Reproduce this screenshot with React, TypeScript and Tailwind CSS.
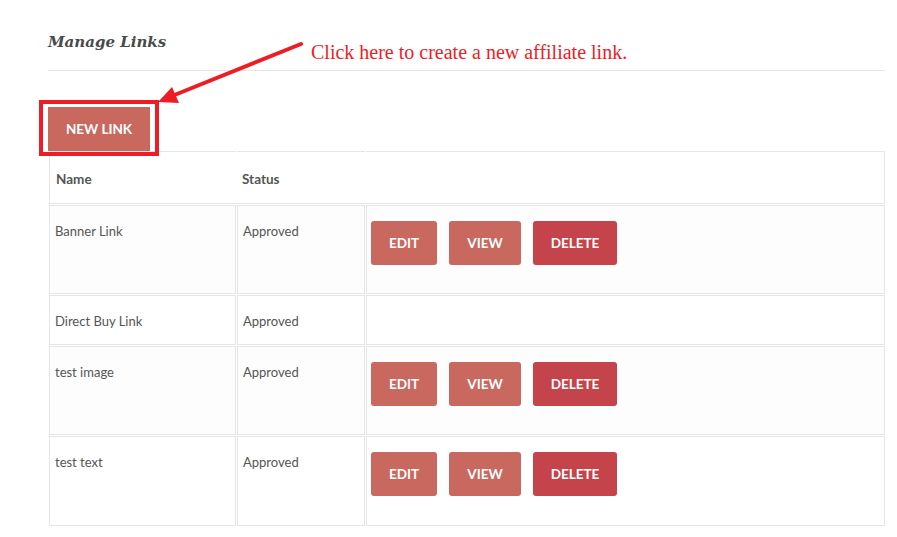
const links = [
  { name: "Banner Link", status: "Approved", actions: true, h: "h-[89px]" },
  { name: "Direct Buy Link", status: "Approved", actions: false, h: "h-[50px]" },
  { name: "test image", status: "Approved", actions: true, h: "h-[89px]" },
  { name: "test text", status: "Approved", actions: true, h: "h-[90px]" },
];

function ActionButtons() {
  return (
    <div className="flex gap-[12px] pt-[15px] pl-[4px]">
      <button className="w-[66px] h-[44px] rounded-[3px] bg-[#c8685f] text-white text-[13.5px] font-bold">EDIT</button>
      <button className="w-[72px] h-[44px] rounded-[3px] bg-[#c8685f] text-white text-[13.5px] font-bold">VIEW</button>
      <button className="w-[84px] h-[44px] rounded-[3px] bg-[#c5434a] text-white text-[13.5px] font-bold">DELETE</button>
    </div>
  );
}

export default function App() {
  return (
    <div
      className="relative w-[897px] h-[537px] bg-white overflow-hidden text-[#555]"
      style={{ fontFamily: "Lato, 'Open Sans', sans-serif" }}
    >
      <div className="pl-[48px] pt-[33px] w-[885px]">
        <h2
          className="text-[15px] font-bold italic text-[#4a4a4a] leading-[18px]"
          style={{ fontFamily: "'DejaVu Serif', 'Liberation Serif', serif" }}
        >
          Manage Links
        </h2>
        <div className="mt-[19px] border-t border-[#e6e6e6]" />

        <div className="pt-[36px]">
          <button className="w-[102px] h-[44px] bg-[#c8685f] text-white text-[13.5px] font-bold">NEW LINK</button>
        </div>

        <div className="ml-px flex flex-col gap-px">
          <div className="grid grid-cols-[187px_128px_519px] gap-x-px border-b border-[#e6e6e6]">
            <div className="h-[52px] border-t border-l border-[#e6e6e6] pl-[6px] pt-[19px] text-[13.5px] font-bold leading-[16px]">Name</div>
            <div className="h-[52px] border-t border-[#e6e6e6] pl-[5px] pt-[19px] text-[13.5px] font-bold leading-[16px]">Status</div>
            <div className="h-[52px] border-t border-r border-[#e6e6e6]" />
          </div>
          {links.map((l, i) => (
            <div key={l.name} className={`grid grid-cols-[187px_128px_519px] gap-x-px ${l.h}`}>
              <div className={`border border-[#e6e6e6] pl-[5px] pt-[17px] text-[13px] leading-[16px] ${i % 2 === 0 ? "bg-[#fdfdfd]" : "bg-white"}`}>{l.name}</div>
              <div className={`border border-[#e6e6e6] pl-[5px] pt-[17px] text-[13px] leading-[16px] ${i % 2 === 0 ? "bg-[#fdfdfd]" : "bg-white"}`}>{l.status}</div>
              <div className={`border border-[#e6e6e6] ${i % 2 === 0 ? "bg-[#fdfdfd]" : "bg-white"}`}>
                {l.actions && <ActionButtons />}
              </div>
            </div>
          ))}
        </div>
      </div>

      {/* annotation overlay */}
      <div className="absolute left-[39px] top-[100px] w-[120px] h-[56px] border-[4px] border-[#ee1c25]" />
      <svg className="absolute left-0 top-0" width="897" height="537" viewBox="0 0 897 537">
        <line x1="301" y1="44" x2="172" y2="96" stroke="#ee1c25" strokeWidth="4" strokeLinecap="round" />
        <polygon points="158,102 172,87 179,103" fill="#ee1c25" />
      </svg>
      <div
        className="absolute left-[311px] top-[40px] text-[20px] leading-[24px] text-[#ee1c25] whitespace-nowrap"
        style={{ fontFamily: "'Liberation Serif', serif" }}
      >
        Click here to create a new affiliate link.
      </div>
    </div>
  );
}
